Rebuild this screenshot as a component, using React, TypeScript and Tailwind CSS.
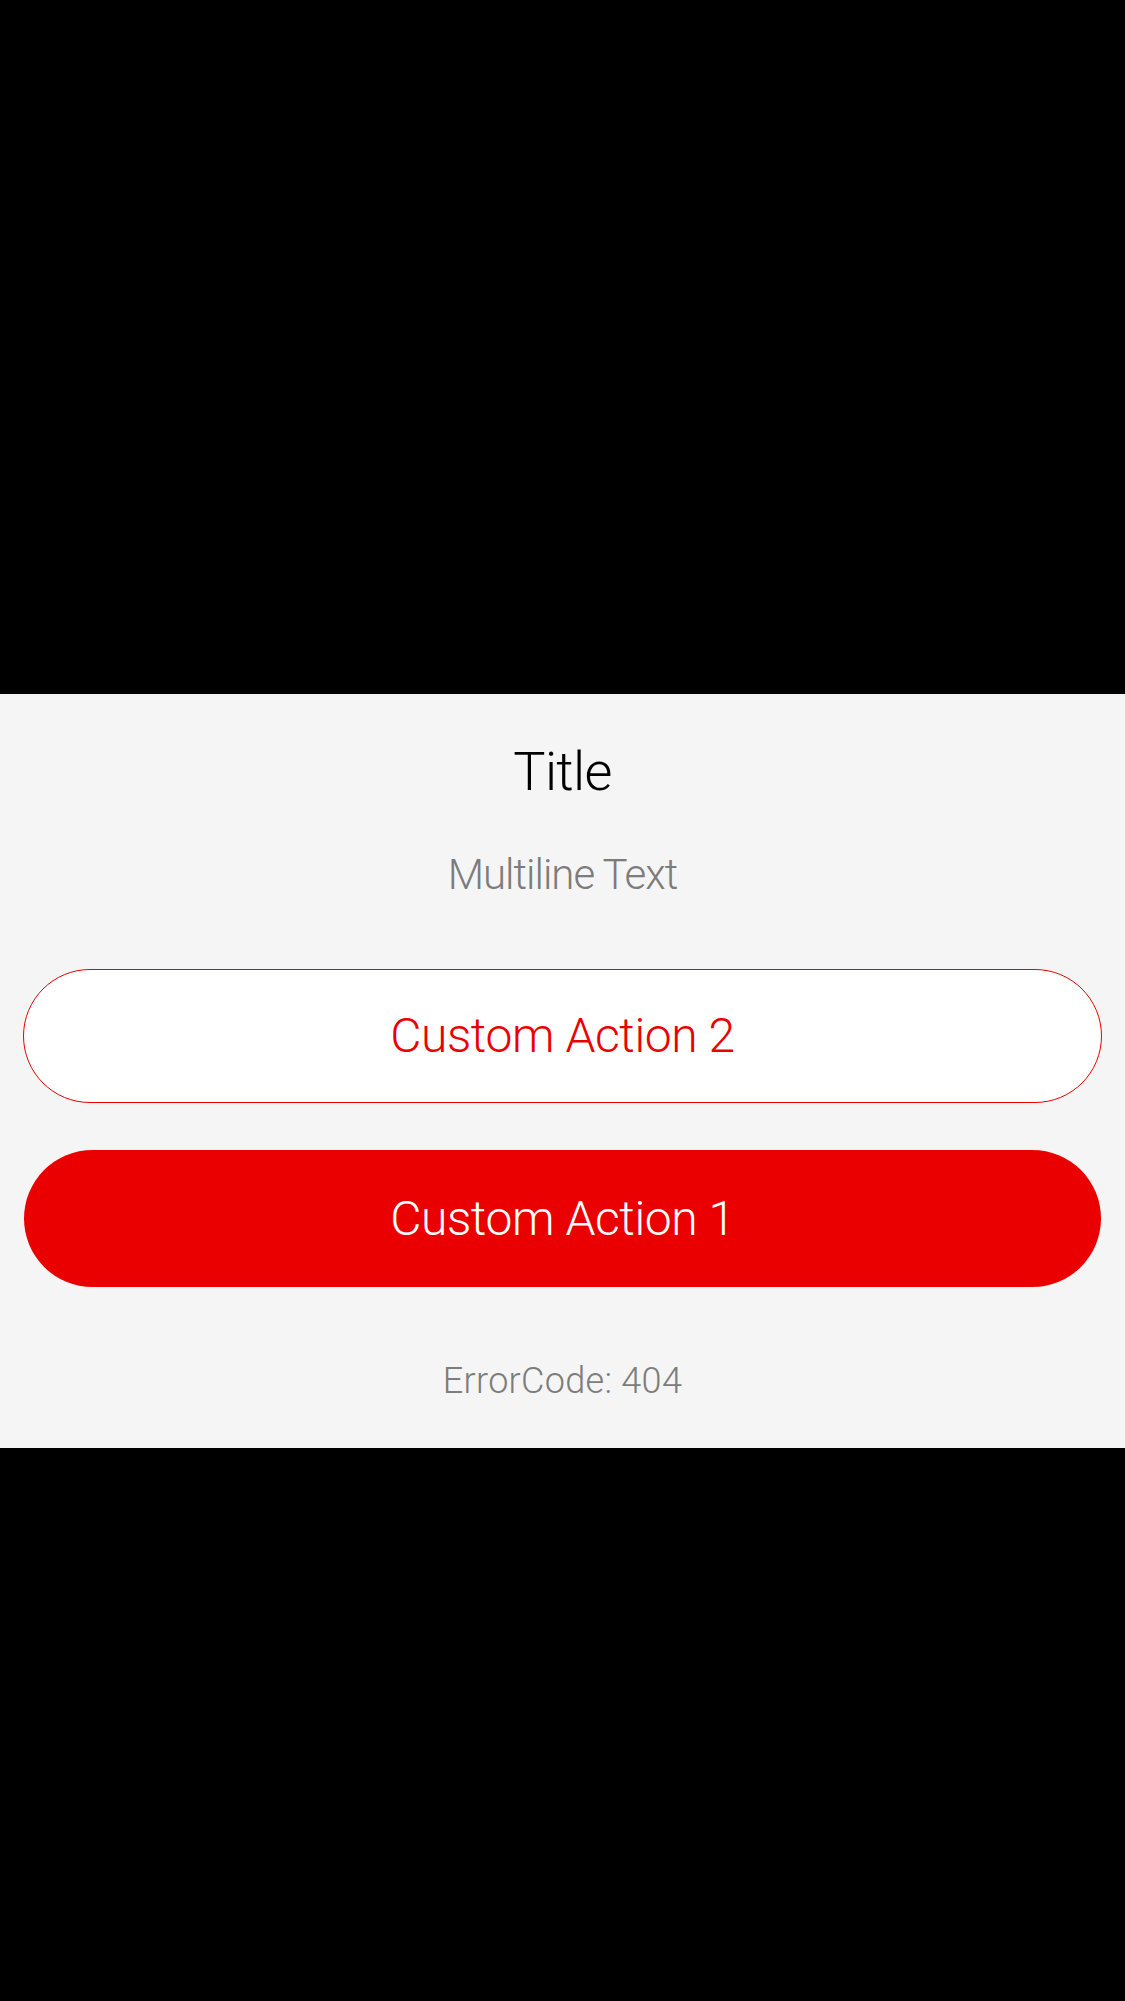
import React from "react";

export default function App() {
  const font = { fontFamily: 'Roboto, "Liberation Sans", sans-serif' };
  return (
    <div className="w-full h-[2001px] bg-black pt-[694px]" style={font}>
      <div className="bg-[#f5f5f5] flex flex-col items-center pt-[46px] pb-[45px]">
        <div className="text-[54px] leading-[64px] font-light tracking-[-0.7px] text-black">Title</div>
        <div className="mt-[46px] text-[42px] leading-[50px] font-light tracking-[-1px] text-[#7c7c7c]">Multiline Text</div>
        <div className="w-full px-[23px] mt-[69px]">
          <button className="w-full h-[134px] rounded-full border border-[#eb0000] bg-white flex items-center justify-center text-[48px] font-light tracking-[-0.4px] text-[#eb0000]">
            Custom Action 2
          </button>
        </div>
        <div className="w-full px-[24px] mt-[47px]">
          <button className="w-full h-[137px] rounded-full bg-[#eb0000] flex items-center justify-center text-[48px] font-light tracking-[-0.4px] text-white">
            Custom Action 1
          </button>
        </div>
        <div className="mt-[72px] text-[36px] leading-[44px] font-light tracking-[0.3px] text-[#7c7c7c]">ErrorCode: 404</div>
      </div>
    </div>
  );
}
